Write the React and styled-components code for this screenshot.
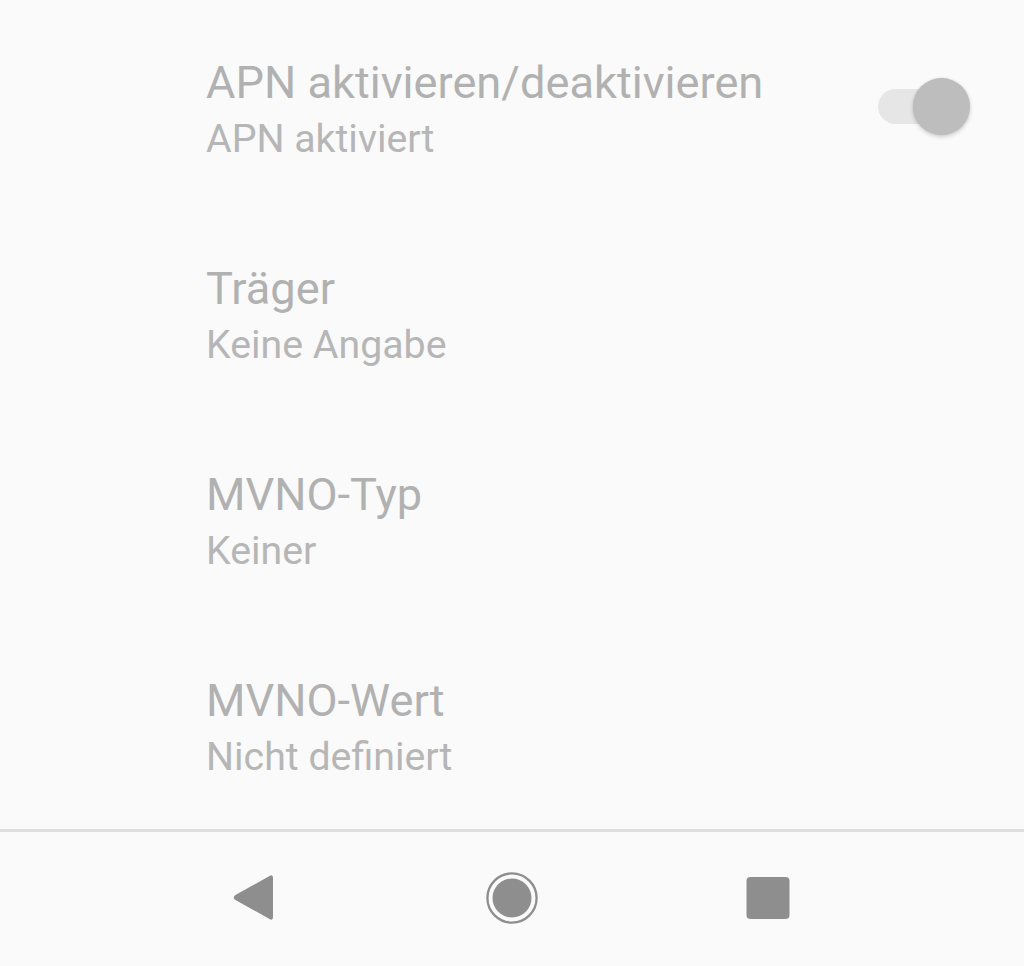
import styled, { createGlobalStyle } from "styled-components";

const GlobalStyle = createGlobalStyle`
  html, body {
    margin: 0;
    padding: 0;
    background: #fafafa;
  }
  body {
    font-family: Roboto, "Noto Sans", sans-serif;
  }
`;

const settings = [
  { title: "APN aktivieren/deaktivieren", summary: "APN aktiviert", toggle: true },
  { title: "Träger", summary: "Keine Angabe" },
  { title: "MVNO-Typ", summary: "Keiner" },
  { title: "MVNO-Wert", summary: "Nicht definiert" },
];

const App = () => {
  return (
    <>
      <GlobalStyle />
      <Screen>
        <List>
          {settings.map((item) => (
            <Row key={item.title}>
              <Texts>
                <Title>{item.title}</Title>
                <Summary>{item.summary}</Summary>
              </Texts>
              {item.toggle && (
                <Switch>
                  <Track />
                  <Thumb />
                </Switch>
              )}
            </Row>
          ))}
        </List>
        <NavBar>
          <NavButton>
            <svg width="56" height="56" viewBox="0 0 56 56">
              <path
                d="M45 8 L45 47 Q45 51 41.5 49 L7 29.8 Q4.5 27.5 7 25.2 L41.5 6 Q45 4 45 8 Z"
                fill="#8e8e8e"
              />
            </svg>
          </NavButton>
          <NavButton>
            <svg width="56" height="56" viewBox="0 0 56 56">
              <circle cx="28" cy="28" r="24.6" fill="none" stroke="#8e8e8e" strokeWidth="2.3" />
              <circle cx="28" cy="28" r="19.5" fill="#8e8e8e" />
            </svg>
          </NavButton>
          <NavButton>
            <svg width="56" height="56" viewBox="0 0 56 56">
              <rect x="6.5" y="7" width="43" height="42" rx="4" fill="#8e8e8e" />
            </svg>
          </NavButton>
        </NavBar>
      </Screen>
    </>
  );
};

const Screen = styled.div`
  width: 1024px;
  height: 966px;
  display: flex;
  flex-direction: column;
  background: #fafafa;
  overflow: hidden;
`;

const List = styled.div`
  height: 832px;
  padding-top: 7px;
  box-sizing: border-box;
  border-bottom: 3px solid #dedede;
`;

const Row = styled.div`
  height: 206px;
  box-sizing: border-box;
  padding: 50px 54px 0 206px;
  display: flex;
  align-items: flex-start;
  justify-content: space-between;
`;

const Texts = styled.div`
  display: flex;
  flex-direction: column;
`;

const Title = styled.div`
  font-size: 45.2px;
  line-height: 51px;
  color: #b1b1b1;
`;

const Summary = styled.div`
  font-size: 39.3px;
  line-height: 55px;
  padding-top: 4px;
  color: #b6b6b6;
`;

const Switch = styled.div`
  position: relative;
  width: 92px;
  height: 58px;
  margin-top: 21px;
`;

const Track = styled.div`
  position: absolute;
  left: 0;
  top: 11px;
  width: 84px;
  height: 35px;
  border-radius: 18px;
  background: #e6e6e6;
`;

const Thumb = styled.div`
  position: absolute;
  right: 0;
  top: 0;
  width: 57px;
  height: 57px;
  border-radius: 50%;
  background: #bdbdbd;
  box-shadow: 0 2px 4px rgba(0, 0, 0, 0.18), 0 0 2px rgba(0, 0, 0, 0.08);
`;

const NavBar = styled.div`
  flex: 1;
  display: flex;
  justify-content: center;
  align-items: center;
  padding-bottom: 2px;
`;

const NavButton = styled.div`
  width: 256px;
  display: flex;
  justify-content: center;
  align-items: center;
`;

export default App;
